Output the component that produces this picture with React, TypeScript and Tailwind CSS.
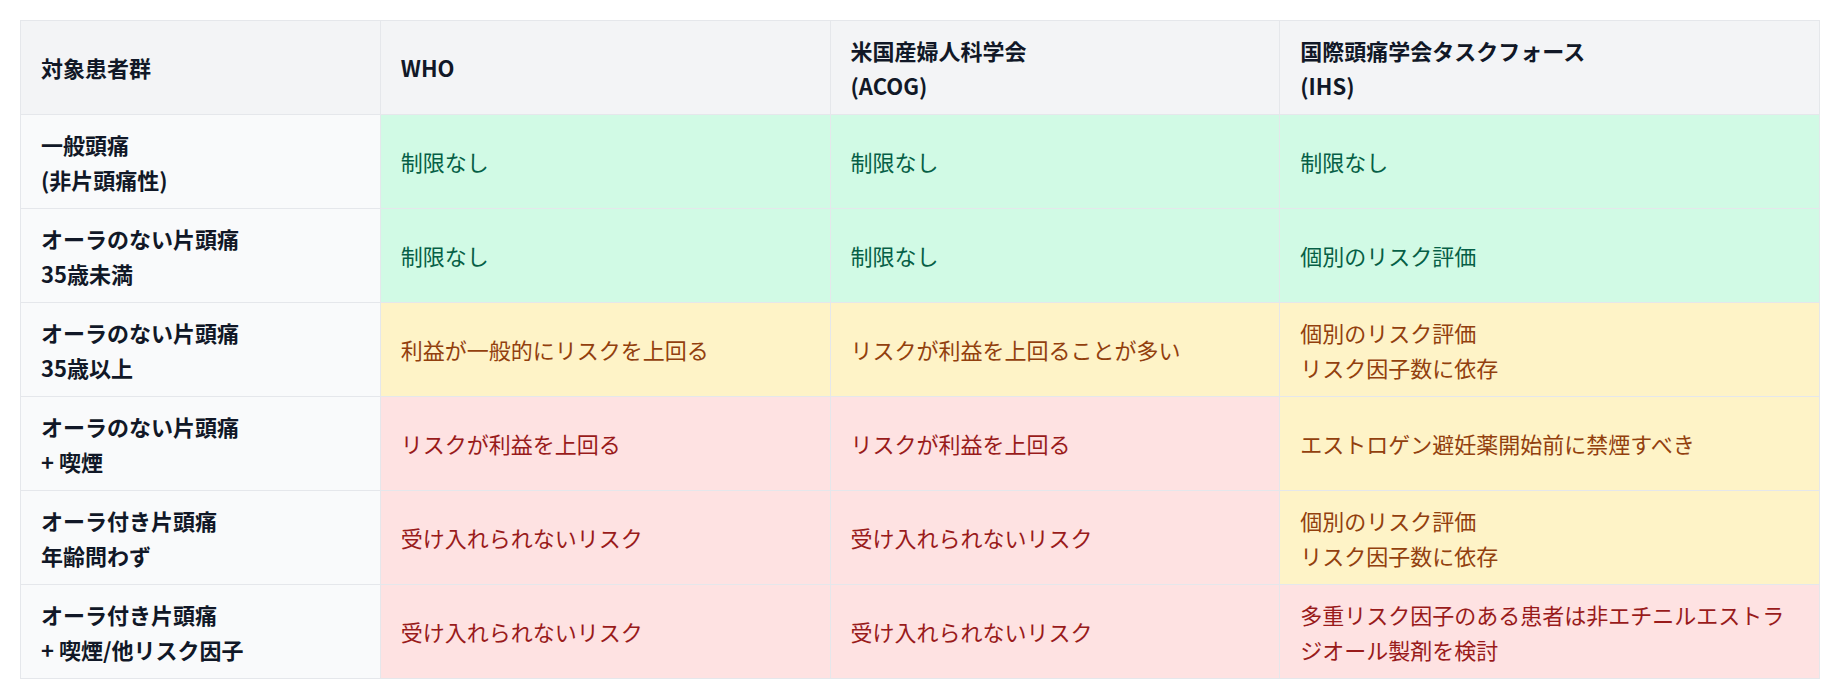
import React from 'react';

type Level = 'ok' | 'caution' | 'danger';

interface Row {
  group: string[];
  cells: { text: string[]; level: Level }[];
}

const levelClass: Record<Level, string> = {
  ok: 'bg-[#d1fae5] text-[#065f46]',
  caution: 'bg-[#fef3c7] text-[#92400e]',
  danger: 'bg-[#fee2e2] text-[#991b1b]',
};

const headers: string[][] = [
  ['対象患者群'],
  ['WHO'],
  ['米国産婦人科学会', '(ACOG)'],
  ['国際頭痛学会タスクフォース', '(IHS)'],
];

const rows: Row[] = [
  {
    group: ['一般頭痛', '(非片頭痛性)'],
    cells: [
      { text: ['制限なし'], level: 'ok' },
      { text: ['制限なし'], level: 'ok' },
      { text: ['制限なし'], level: 'ok' },
    ],
  },
  {
    group: ['オーラのない片頭痛', '35歳未満'],
    cells: [
      { text: ['制限なし'], level: 'ok' },
      { text: ['制限なし'], level: 'ok' },
      { text: ['個別のリスク評価'], level: 'ok' },
    ],
  },
  {
    group: ['オーラのない片頭痛', '35歳以上'],
    cells: [
      { text: ['利益が一般的にリスクを上回る'], level: 'caution' },
      { text: ['リスクが利益を上回ることが多い'], level: 'caution' },
      { text: ['個別のリスク評価', 'リスク因子数に依存'], level: 'caution' },
    ],
  },
  {
    group: ['オーラのない片頭痛', '+ 喫煙'],
    cells: [
      { text: ['リスクが利益を上回る'], level: 'danger' },
      { text: ['リスクが利益を上回る'], level: 'danger' },
      { text: ['エストロゲン避妊薬開始前に禁煙すべき'], level: 'caution' },
    ],
  },
  {
    group: ['オーラ付き片頭痛', '年齢問わず'],
    cells: [
      { text: ['受け入れられないリスク'], level: 'danger' },
      { text: ['受け入れられないリスク'], level: 'danger' },
      { text: ['個別のリスク評価', 'リスク因子数に依存'], level: 'caution' },
    ],
  },
  {
    group: ['オーラ付き片頭痛', '+ 喫煙/他リスク因子'],
    cells: [
      { text: ['受け入れられないリスク'], level: 'danger' },
      { text: ['受け入れられないリスク'], level: 'danger' },
      { text: ['多重リスク因子のある患者は非エチニルエストラジオール製剤を検討'], level: 'danger' },
    ],
  },
];

function Lines({ lines }: { lines: string[] }) {
  return (
    <>
      {lines.map((l, i) => (
        <React.Fragment key={i}>
          {i > 0 && <br />}
          {l}
        </React.Fragment>
      ))}
    </>
  );
}

export default function App() {
  return (
    <div
      className="bg-white p-5 text-[22px] leading-[34.5px]"
      style={{ fontFamily: '"Noto Sans CJK JP", "Noto Sans", sans-serif' }}
    >
      <table className="w-full table-fixed border-collapse">
        <colgroup>
          <col className="w-[20%]" />
          <col className="w-[25%]" />
          <col className="w-[25%]" />
          <col className="w-[30%]" />
        </colgroup>
        <thead>
          <tr className="bg-[#f3f4f6]">
            {headers.map((h, i) => (
              <th
                key={i}
                className="border border-[#e5e7eb] px-5 py-3 text-left align-middle font-bold text-[#111827]"
              >
                <Lines lines={h} />
              </th>
            ))}
          </tr>
        </thead>
        <tbody>
          {rows.map((r, i) => (
            <tr key={i}>
              <td className="border border-[#e5e7eb] bg-[#f9fafb] px-5 py-3 align-middle font-bold text-[#111827]">
                <Lines lines={r.group} />
              </td>
              {r.cells.map((c, j) => (
                <td
                  key={j}
                  className={`border border-[#e5e7eb] px-5 py-3 align-middle ${levelClass[c.level]}`}
                >
                  <Lines lines={c.text} />
                </td>
              ))}
            </tr>
          ))}
        </tbody>
      </table>
    </div>
  );
}
